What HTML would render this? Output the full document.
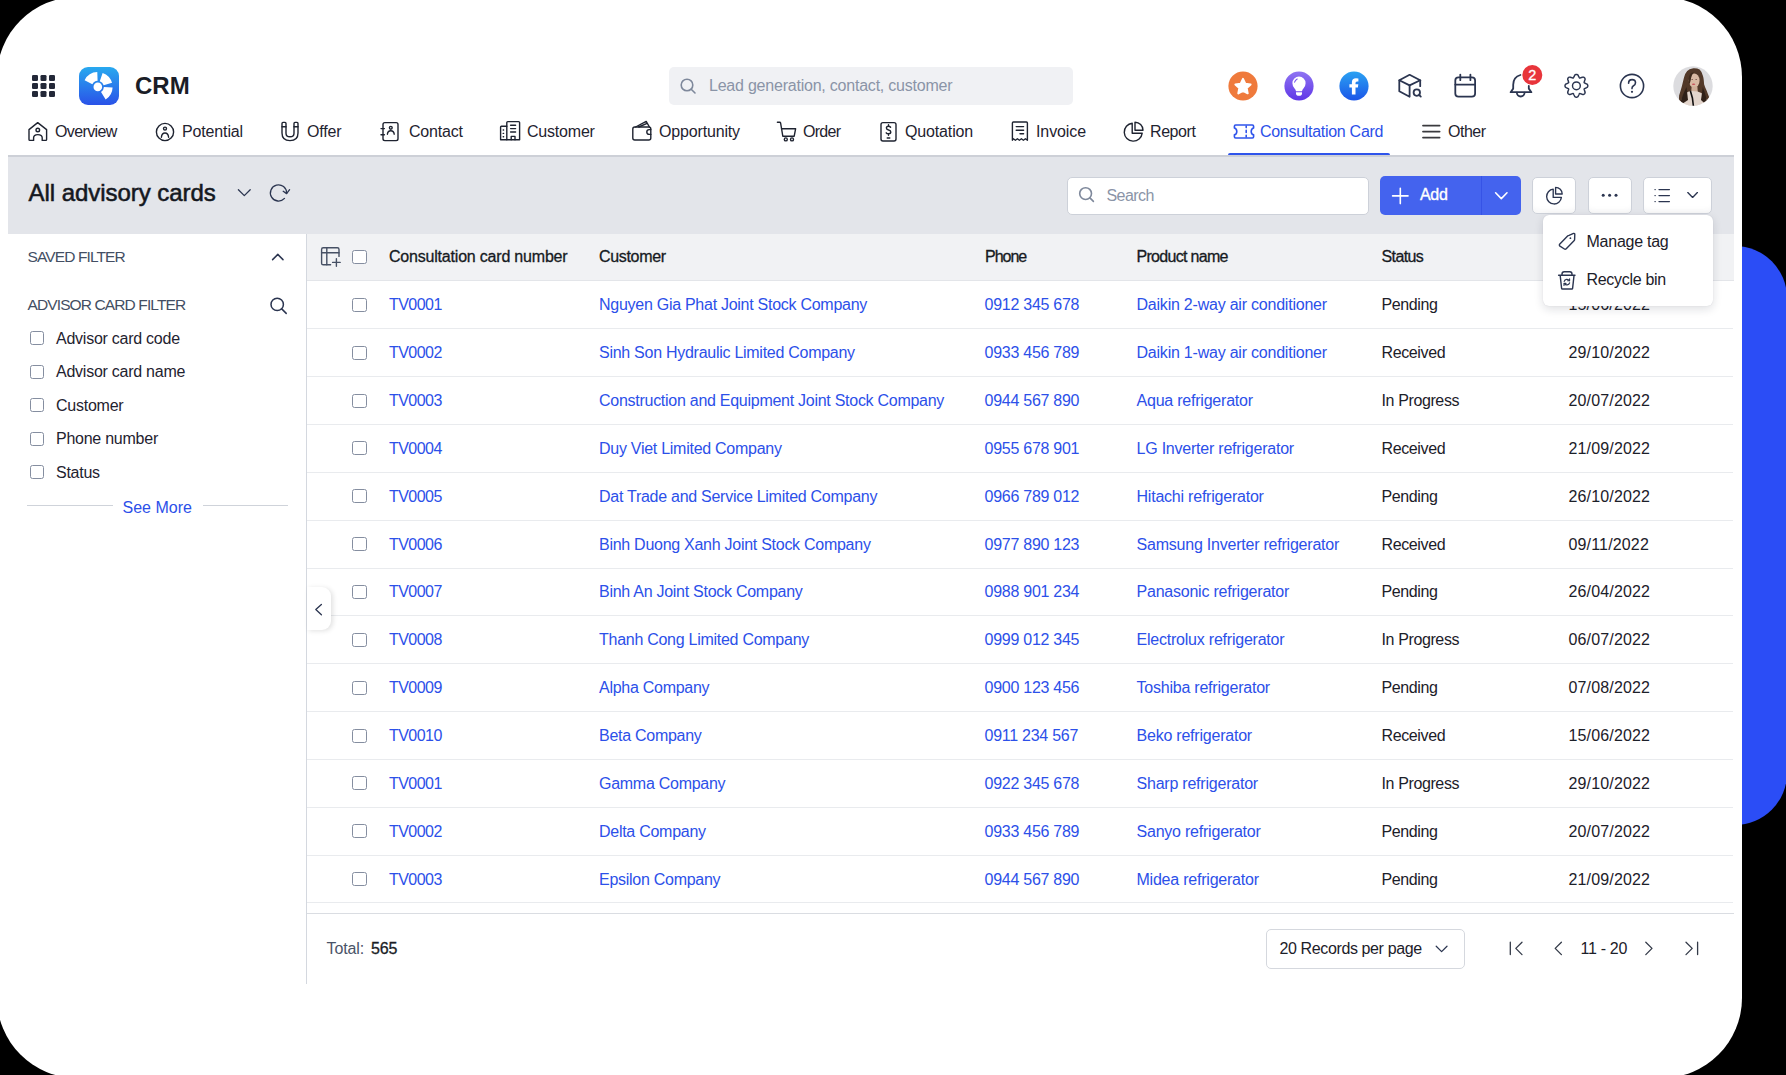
<!DOCTYPE html>
<html><head><meta charset="utf-8">
<style>
*{box-sizing:border-box;margin:0;padding:0}
html,body{width:1786px;height:1075px;overflow:hidden;background:#000}
body{position:relative;font-family:"Liberation Sans",sans-serif;color:#1F2330}
.blob{position:absolute;left:1683px;top:246px;width:104px;height:579px;border-radius:52px;background:#2B4DF6}
.card{position:absolute;left:-3px;top:-3px;width:1745px;height:1080.5px;border-radius:80px;background:#fff}
.app{position:absolute;left:0;top:0;width:1742px;height:1075px}
.t{position:absolute;white-space:nowrap;font-size:16px;line-height:16px}
.ic{position:absolute;display:block;overflow:visible}
.lk{color:#2C50E9}
.th{color:#161A22;-webkit-text-stroke:0.3px #161A22}
.td{color:#1C2029}
.cb{position:absolute;width:14.4px;height:14px;border:1.5px solid #858EA0;border-radius:2.5px;background:#fff}
</style></head><body>
<div class="blob"></div>
<div class="card"></div>
<div class="app">
<!-- TOP BAR -->
<svg class="ic" style="left:32px;top:75px" width="23" height="22" viewBox="0 0 23 22">
<g fill="#232838">
<rect x="0" y="0" width="6" height="6" rx="1.3"/><rect x="8.5" y="0" width="6" height="6" rx="1.3"/><rect x="17" y="0" width="6" height="6" rx="1.3"/>
<rect x="0" y="8" width="6" height="6" rx="1.3"/><rect x="8.5" y="8" width="6" height="6" rx="1.3"/><rect x="17" y="8" width="6" height="6" rx="1.3"/>
<rect x="0" y="16" width="6" height="6" rx="1.3"/><rect x="8.5" y="16" width="6" height="6" rx="1.3"/><rect x="17" y="16" width="6" height="6" rx="1.3"/>
</g></svg>
<svg class="ic" style="left:79px;top:67px" width="40" height="38" viewBox="0 0 40 38">
<defs><linearGradient id="lg" x1="0" y1="0" x2="0" y2="1"><stop offset="0" stop-color="#28A9EF"/><stop offset="1" stop-color="#2A52E8"/></linearGradient></defs>
<rect width="40" height="38" rx="9" fill="url(#lg)"/>
<g fill="#fff">
<path d="M13.36 17.13L5.61 13.18A14.8 14.8 0 0 1 18.28 5.11L18.59 13.80A6.1 6.1 0 0 0 13.36 17.13Z"/>
<path d="M20.79 14.13L23.62 5.91A14.8 14.8 0 0 1 33.03 15.82L24.66 18.22A6.1 6.1 0 0 0 20.79 14.13Z"/>
<path d="M24.90 20.11L33.59 20.42A14.8 14.8 0 0 1 26.64 32.45L22.03 25.07A6.1 6.1 0 0 0 24.90 20.11Z"/>
<circle cx="18.8" cy="19.9" r="4.3"/>
</g></svg>
<div class="t" style="left:135px;top:74px;font-size:24px;line-height:24px;font-weight:700;color:#1A1D27">CRM</div>

<div style="position:absolute;left:669px;top:67px;width:404px;height:38px;border-radius:5px;background:#F0F1F4"></div>
<svg class="ic" style="left:680px;top:78px" width="17" height="16" viewBox="0 0 17 16"><circle cx="7" cy="7" r="5.8" fill="none" stroke="#7E889B" stroke-width="1.6"/><path d="M11.2 11.2 L15 15" stroke="#7E889B" stroke-width="1.6" stroke-linecap="round"/></svg>
<div class="t" style="left:709px;top:78px;color:#8A94A7;letter-spacing:-0.22px">Lead generation, contact, customer</div>

<!-- right icons -->
<svg class="ic" style="left:1228px;top:71px" width="30" height="30" viewBox="0 0 30 30">
<circle cx="15" cy="15" r="14.6" fill="#EF7A3C"/>
<path d="M15.00 7.90 L17.29 12.74 L22.61 13.43 L18.71 17.11 L19.70 22.37 L15.00 19.80 L10.30 22.37 L11.29 17.11 L7.39 13.43 L12.71 12.74 Z" fill="#fff" stroke="#fff" stroke-width="2" stroke-linejoin="round"/>
</svg>
<svg class="ic" style="left:1283.5px;top:71px" width="30" height="30" viewBox="0 0 30 30">
<defs><linearGradient id="pg" x1="0" y1="0" x2="0" y2="1"><stop offset="0" stop-color="#8F74F2"/><stop offset="1" stop-color="#5F36E7"/></linearGradient></defs>
<circle cx="15" cy="15" r="14.6" fill="url(#pg)"/>
<path d="M15 5.6 A6.6 6.6 0 0 1 21.6 12.2 Q21.6 14.8 19.6 17.2 Q18.2 18.8 18 20.2 L12 20.2 Q11.8 18.8 10.4 17.2 Q8.4 14.8 8.4 12.2 A6.6 6.6 0 0 1 15 5.6 Z" fill="#fff"/>
<path d="M12 21.2 L18 21.2 L18 22.2 Q18 24.8 15 24.8 Q12 24.8 12 22.2 Z" fill="#fff"/>
<path d="M10.6 11.2 Q11.2 9 13.2 8" stroke="#7A58EE" stroke-width="1.1" fill="none" stroke-linecap="round"/>
</svg>
<svg class="ic" style="left:1339px;top:71px" width="30" height="30" viewBox="0 0 30 30">
<defs><linearGradient id="fg" x1="0" y1="0" x2="0" y2="1"><stop offset="0" stop-color="#2BA2F2"/><stop offset="1" stop-color="#1B55E8"/></linearGradient></defs>
<circle cx="15" cy="15" r="14.6" fill="url(#fg)"/>
<path d="M12.9 23.4 L12.9 16.4 L10.4 16.4 L10.4 13.2 L12.9 13.2 L12.9 11.2 Q12.9 7.3 17 7.3 Q18.4 7.3 19.4 7.5 L19.4 10.4 L18 10.4 Q16.5 10.4 16.5 12 L16.5 13.2 L19.3 13.2 L18.9 16.4 L16.5 16.4 L16.5 23.4 Z" fill="#fff"/>
</svg>
<svg class="ic" style="left:1393px;top:68px" width="34" height="34" viewBox="1393 68 34 34">
<g fill="none" stroke="#2B3550" stroke-width="1.8" stroke-linejoin="round" stroke-linecap="round">
<path d="M1409.6 85.4 L1399.3 80.3 L1409.6 74.8 L1420.2 80.3 Z"/>
<path d="M1399.3 80.3 L1399.3 91.2 L1409.6 96.7 L1409.6 85.4"/>
<path d="M1420.2 80.3 L1420.2 86.2"/>
<circle cx="1416.8" cy="92.6" r="3.2"/>
<path d="M1419.2 95 L1420.8 96.6"/>
</g></svg>
<svg class="ic" style="left:1450px;top:70px" width="30" height="32" viewBox="1450 70 30 32">
<g fill="none" stroke="#2B3550" stroke-width="1.8" stroke-linecap="round">
<rect x="1455.3" y="77.3" width="19.8" height="19.4" rx="3.2"/>
<path d="M1455.3 84.6 L1475.1 84.6 M1460.3 74.6 L1460.3 80.2 M1470.4 74.6 L1470.4 80.2"/>
</g></svg>
<svg class="ic" style="left:1505px;top:62px" width="45" height="40" viewBox="1505 62 45 40">
<g fill="none" stroke="#2B3550" stroke-width="1.8" stroke-linecap="round" stroke-linejoin="round">
<path d="M1520.4 75 Q1513.2 77 1513.2 84.8 L1513.2 88.6 L1510.6 92.2 L1531.4 92.2 L1528.8 88.6 L1528.8 86"/>
<path d="M1516.8 92.6 A3.9 3.9 0 0 0 1524.6 92.6"/>
</g>
<circle cx="1532.3" cy="75" r="10" fill="#E8353B"/>
<text x="1532.3" y="79.8" text-anchor="middle" font-family="Liberation Sans" font-weight="400" font-size="14.5" fill="#fff" stroke="#fff" stroke-width="0.3">2</text>
</svg>
<svg class="ic" style="left:1562px;top:72px" width="28" height="28" viewBox="0 0 28 28">
<g fill="none" stroke="#2B3550" stroke-width="1.45" stroke-linejoin="round">
<path d="M25.80 13.80 L25.78 14.10 L25.72 14.39 L25.61 14.68 L25.47 14.96 L25.27 15.23 L25.00 15.48 L24.61 15.69 L24.04 15.85 L23.80 16.06 L23.48 16.23 L23.14 16.39 L22.80 16.53 L22.51 16.67 L22.29 16.83 L22.16 17.01 L22.12 17.24 L22.16 17.50 L22.27 17.81 L22.41 18.15 L22.55 18.50 L22.65 18.85 L22.67 19.17 L22.96 19.68 L23.08 20.11 L23.10 20.47 L23.05 20.80 L22.95 21.11 L22.82 21.38 L22.66 21.64 L22.46 21.86 L22.24 22.06 L21.98 22.22 L21.71 22.35 L21.40 22.45 L21.07 22.50 L20.71 22.48 L20.28 22.36 L19.77 22.07 L19.45 22.05 L19.10 21.95 L18.75 21.81 L18.41 21.67 L18.10 21.56 L17.84 21.52 L17.61 21.56 L17.43 21.69 L17.27 21.91 L17.13 22.20 L16.99 22.54 L16.83 22.88 L16.66 23.20 L16.45 23.44 L16.29 24.01 L16.08 24.40 L15.83 24.67 L15.56 24.87 L15.28 25.01 L14.99 25.12 L14.70 25.18 L14.40 25.20 L14.10 25.18 L13.81 25.12 L13.52 25.01 L13.24 24.87 L12.97 24.67 L12.72 24.40 L12.51 24.01 L12.35 23.44 L12.14 23.20 L11.97 22.88 L11.81 22.54 L11.67 22.20 L11.53 21.91 L11.37 21.69 L11.19 21.56 L10.96 21.52 L10.70 21.56 L10.39 21.67 L10.05 21.81 L9.70 21.95 L9.35 22.05 L9.03 22.07 L8.52 22.36 L8.09 22.48 L7.73 22.50 L7.40 22.45 L7.09 22.35 L6.82 22.22 L6.56 22.06 L6.34 21.86 L6.14 21.64 L5.98 21.38 L5.85 21.11 L5.75 20.80 L5.70 20.47 L5.72 20.11 L5.84 19.68 L6.13 19.17 L6.15 18.85 L6.25 18.50 L6.39 18.15 L6.53 17.81 L6.64 17.50 L6.68 17.24 L6.64 17.01 L6.51 16.83 L6.29 16.67 L6.00 16.53 L5.66 16.39 L5.32 16.23 L5.00 16.06 L4.76 15.85 L4.19 15.69 L3.80 15.48 L3.53 15.23 L3.33 14.96 L3.19 14.68 L3.08 14.39 L3.02 14.10 L3.00 13.80 L3.02 13.50 L3.08 13.21 L3.19 12.92 L3.33 12.64 L3.53 12.37 L3.80 12.12 L4.19 11.91 L4.76 11.75 L5.00 11.54 L5.32 11.37 L5.66 11.21 L6.00 11.07 L6.29 10.93 L6.51 10.77 L6.64 10.59 L6.68 10.36 L6.64 10.10 L6.53 9.79 L6.39 9.45 L6.25 9.10 L6.15 8.75 L6.13 8.43 L5.84 7.92 L5.72 7.49 L5.70 7.13 L5.75 6.80 L5.85 6.49 L5.98 6.22 L6.14 5.96 L6.34 5.74 L6.56 5.54 L6.82 5.38 L7.09 5.25 L7.40 5.15 L7.73 5.10 L8.09 5.12 L8.52 5.24 L9.03 5.53 L9.35 5.55 L9.70 5.65 L10.05 5.79 L10.39 5.93 L10.70 6.04 L10.96 6.08 L11.19 6.04 L11.37 5.91 L11.53 5.69 L11.67 5.40 L11.81 5.06 L11.97 4.72 L12.14 4.40 L12.35 4.16 L12.51 3.59 L12.72 3.20 L12.97 2.93 L13.24 2.73 L13.52 2.59 L13.81 2.48 L14.10 2.42 L14.40 2.40 L14.70 2.42 L14.99 2.48 L15.28 2.59 L15.56 2.73 L15.83 2.93 L16.08 3.20 L16.29 3.59 L16.45 4.16 L16.66 4.40 L16.83 4.72 L16.99 5.06 L17.13 5.40 L17.27 5.69 L17.43 5.91 L17.61 6.04 L17.84 6.08 L18.10 6.04 L18.41 5.93 L18.75 5.79 L19.10 5.65 L19.45 5.55 L19.77 5.53 L20.28 5.24 L20.71 5.12 L21.07 5.10 L21.40 5.15 L21.71 5.25 L21.98 5.38 L22.24 5.54 L22.46 5.74 L22.66 5.96 L22.82 6.22 L22.95 6.49 L23.05 6.80 L23.10 7.13 L23.08 7.49 L22.96 7.92 L22.67 8.43 L22.65 8.75 L22.55 9.10 L22.41 9.45 L22.27 9.79 L22.16 10.10 L22.12 10.36 L22.16 10.59 L22.29 10.77 L22.51 10.93 L22.80 11.07 L23.14 11.21 L23.48 11.37 L23.80 11.54 L24.04 11.75 L24.61 11.91 L25.00 12.12 L25.27 12.37 L25.47 12.64 L25.61 12.92 L25.72 13.21 L25.78 13.50 Z"/>
<circle cx="14.4" cy="13.8" r="3.9"/>
</g></svg>
<svg class="ic" style="left:1618px;top:72px" width="28" height="28" viewBox="0 0 28 28">
<circle cx="14" cy="14" r="11.6" fill="none" stroke="#2B3550" stroke-width="1.6"/>
<path d="M10.6 11.2 Q10.6 7.6 14.1 7.6 Q17.5 7.6 17.5 10.8 Q17.5 12.8 15.2 14 Q14 14.7 14 16.6" fill="none" stroke="#2B3550" stroke-width="1.6" stroke-linecap="round"/>
<circle cx="14" cy="19.8" r="1.1" fill="#2B3550"/>
</svg>
<svg class="ic" style="left:1672.6px;top:66px" width="40" height="40" viewBox="0 0 40 40">
<defs><clipPath id="av"><circle cx="20" cy="20" r="19.7"/></clipPath></defs>
<g clip-path="url(#av)">
<rect width="40" height="40" fill="#DCDCDF"/>
<path d="M20.4 2.3 Q16 2.8 14.2 4.9 Q11.6 7.8 11 11.6 L8.8 20.5 Q7.4 25.5 6.1 29.5 Q5.6 33.5 6.6 34.8 L10.1 36.2 L31.1 36.2 L34.7 35.3 Q36.8 33.5 36 30.8 Q34.8 27.8 33.8 25 Q31.8 21 31.1 18.3 Q30.8 12 29.8 9.4 Q28.4 5.2 26.6 3.6 Q24 2.1 20.4 2.3 Z" fill="#513828"/>
<ellipse cx="21.2" cy="14.6" rx="5.4" ry="7.2" fill="#D9B9A3"/>
<path d="M15.6 12.5 Q16.2 6.5 21 6.2 Q18.4 8.6 17.8 14 Q17.2 17 16 18.6 Z" fill="#3E2A1C"/>
<path d="M18.6 20.5 L24.4 20.5 L24.8 26 L18.2 26 Z" fill="#CFAE98"/>
<path d="M7 40 Q8.5 30 13 27 Q16 25 18 25 L24.5 25.5 Q29 26.5 31 29 Q34 33 35 40 Z" fill="#E3D5CC"/>
<path d="M6 40 L9.5 30 Q12 24 13.5 21 L15 34 Z" fill="#2F2018"/>
<path d="M34.5 40 L33 31 Q31.5 25 29.8 21 L28 34 Z" fill="#2F2018"/>
<path d="M17.4 25 L19.4 32 L20.4 40" stroke="#121010" stroke-width="1.6" fill="none"/>
<ellipse cx="20.6" cy="18.2" rx="1.7" ry="0.8" fill="#C9505A"/>
<ellipse cx="19.2" cy="13.4" rx="0.9" ry="0.5" fill="#7A5A4C"/>
<ellipse cx="23.2" cy="13.4" rx="0.9" ry="0.5" fill="#7A5A4C"/>
</g></svg>

<!-- NAV -->
<div class="t" style="left:55px;top:123.5px;letter-spacing:-0.61px">Overview</div>
<div class="t" style="left:182px;top:123.5px;letter-spacing:-0.14px">Potential</div>
<div class="t" style="left:307px;top:123.5px;letter-spacing:-0.18px">Offer</div>
<div class="t" style="left:409px;top:123.5px;letter-spacing:-0.19px">Contact</div>
<div class="t" style="left:527px;top:123.5px;letter-spacing:-0.2px">Customer</div>
<div class="t" style="left:659px;top:123.5px;letter-spacing:-0.16px">Opportunity</div>
<div class="t" style="left:803px;top:123.5px;letter-spacing:-0.7px">Order</div>
<div class="t" style="left:905px;top:123.5px;letter-spacing:-0.15px">Quotation</div>
<div class="t" style="left:1036px;top:123.5px;letter-spacing:-0.1px">Invoice</div>
<div class="t" style="left:1150px;top:123.5px;letter-spacing:-0.42px">Report</div>
<div class="t" style="left:1260px;top:123.5px;letter-spacing:-0.29px;color:#2C50E9">Consultation Card</div>
<div class="t" style="left:1448px;top:123.5px;letter-spacing:-0.5px">Other</div>
<div style="position:absolute;left:1228px;top:152.5px;width:162px;height:3px;border-radius:2px 2px 0 0;background:#2F54EB"></div>
<svg class="ic" style="left:0;top:0" width="1742" height="160" viewBox="0 0 1742 160">
<g fill="none" stroke="#1E2330" stroke-width="1.4" stroke-linecap="round" stroke-linejoin="round">
<!-- home -->
<path d="M29 139.6 L29 129.6 L37.7 122.6 L46.6 129.6 L46.6 139.6 Q46.6 140.4 45.8 140.4 L42.2 140.4 L42.2 137.8 Q42.2 134.6 37.8 134.6 Q33.6 134.6 33.6 137.8 L33.6 140.4 L29.8 140.4 Q29 140.4 29 139.6 Z"/>
<circle cx="37.8" cy="130" r="1.8"/>
<!-- potential -->
<circle cx="165" cy="132" r="8.6"/>
<circle cx="165" cy="128.6" r="1.5"/>
<path d="M161.4 137.2 Q161.8 133 165 133 Q168.2 133 168.6 137.2"/>
<!-- offer magnet -->
<path d="M282 123.4 Q282 122.4 283 122.4 L285 122.4 Q286 122.4 286 123.4 L286 133.2 Q286 136.8 290 136.8 Q294 136.8 294 133.2 L294 123.4 Q294 122.4 295 122.4 L297 122.4 Q298 122.4 298 123.4 L298 133 Q298 140.6 290 140.6 Q282 140.6 282 133 Z"/>
<path d="M282 126.8 L286 126.8 M294 126.8 L298 126.8"/>
<!-- contact -->
<rect x="383" y="122.6" width="15" height="18" rx="1.8"/>
<path d="M381 128.6 L384.4 128.6 M381 134.8 L384.4 134.8"/>
<circle cx="390.8" cy="127.8" r="1.4"/>
<path d="M387.4 134.2 Q387.8 130.8 390.8 130.8 Q393.8 130.8 394.2 134.2"/>
<!-- customer building -->
<path d="M506.8 139.8 L506.8 122.6 Q506.8 121.6 507.8 121.6 L518.6 121.6 Q519.6 121.6 519.6 122.6 L519.6 139.8 Z"/>
<path d="M506.8 126.2 L501.4 126.2 Q500.6 126.2 500.6 127 L500.6 139.8 L506.8 139.8"/>
<path d="M510.6 125.2 L515.6 125.2 M510.6 128.6 L515.6 128.6 M510.6 132 L515.6 132"/>
<path d="M511.2 139.8 L511.2 136.4 L515 136.4 L515 139.8"/>
<path d="M503.2 130 L503.6 130 M503.2 133.4 L503.6 133.4 M503.2 136.8 L503.6 136.8"/>
<!-- opportunity wallet -->
<rect x="632.8" y="127" width="18" height="13" rx="2"/>
<path d="M635.6 127 L646.2 121.4 L649.4 127 M638.8 127 L647 123.4"/>
<path d="M650.8 129.6 L649.2 129.6 Q646.8 129.6 646.8 132 Q646.8 134.4 649.2 134.4 L650.8 134.4"/>
<!-- order cart -->
<path d="M777.4 122.2 L779.6 122.2 Q780.4 122.2 780.6 123 L782.8 136.2 L794.2 136.2 L795.6 128.8 L781.4 128.8"/>
<circle cx="785.8" cy="139.4" r="1.5"/>
<circle cx="792" cy="139.4" r="1.5"/>
<!-- quotation -->
<rect x="881" y="122.6" width="15" height="18.4" rx="2"/>
<path d="M890.6 127.2 Q889.8 126.2 888.4 126.2 Q886.4 126.2 886.4 128 Q886.4 129.6 888.6 130 Q890.8 130.4 890.8 132 Q890.8 133.8 888.6 133.8 Q886.8 133.8 886.2 132.8 M888.5 124.8 L888.5 126.2 M888.5 133.8 L888.5 135.2 M887.2 138 L889.8 138"/>
<!-- invoice -->
<path d="M1012.4 140.2 L1012.4 123 Q1012.4 122 1013.4 122 L1026.4 122 Q1027.4 122 1027.4 123 L1027.4 140.2 L1025.4 138.8 L1023.4 140.2 L1021.4 138.8 L1019.4 140.2 L1017.4 138.8 L1015.4 140.2 L1013.4 138.8 Z"/>
<path d="M1016.2 126.6 L1023.6 126.6 M1016.2 130.2 L1023.6 130.2 M1020 133.8 L1023.6 133.8"/>
<!-- report -->
<path d="M1132.2 123.2 A9 9 0 1 0 1142.2 133.2 L1132.2 133.2 Z"/>
<path d="M1135 122.2 A8 8 0 0 1 1143 130.2 L1135 130.2 Z"/>
<!-- other -->
<path d="M1423 125.6 L1439.6 125.6 M1423 131.6 L1439.6 131.6 M1423 137.6 L1439.6 137.6" stroke="#3A3A3E" stroke-width="1.8"/>
</g>
<g fill="none" stroke="#2F54EB" stroke-width="1.6" stroke-linejoin="round">
<path d="M1235.6 125 L1252.4 125 Q1253.6 125 1253.6 126.2 L1253.6 128 Q1251.2 128.6 1251.2 131.4 Q1251.2 134.2 1253.6 134.8 L1253.6 136.8 Q1253.6 138 1252.4 138 L1235.6 138 Q1234.4 138 1234.4 136.8 L1234.4 134.8 Q1236.8 134.2 1236.8 131.4 Q1236.8 128.6 1234.4 128 L1234.4 126.2 Q1234.4 125 1235.6 125 Z"/>
<path d="M1246.2 126 L1246.2 127.6 M1246.2 130.4 L1246.2 132.4 M1246.2 135.2 L1246.2 137" stroke-linecap="round"/>
</g>
</svg>
<!--BAND-->
<div style="position:absolute;left:8px;top:155px;width:1725.5px;height:78.5px;background:#E3E5EA;border-top:2px solid #CDD0D7"></div>
<div class="t" style="left:28.5px;top:181px;font-size:24px;line-height:24px;color:#15181F;-webkit-text-stroke:0.55px #15181F;letter-spacing:-0.05px">All advisory cards</div>
<svg class="ic" style="left:230px;top:180px" width="70" height="30" viewBox="230 180 70 30">
<path d="M238.4 189.8 L244.3 195.6 L250.2 189.8" fill="none" stroke="#2B3550" stroke-width="1.3" stroke-linecap="round" stroke-linejoin="round"/>
<path d="M284.5 198.4 A8.1 8.1 0 1 1 286.6 193.2" fill="none" stroke="#2B3550" stroke-width="1.3" stroke-linecap="round"/>
<path d="M283.2 191.3 L286.6 193.6 L289.6 189.7" fill="none" stroke="#2B3550" stroke-width="1.3" stroke-linecap="round" stroke-linejoin="round"/>
</svg>
<div style="position:absolute;left:1066.5px;top:176.5px;width:302.5px;height:38px;border-radius:5px;background:#fff;border:1px solid #CDD1D9"></div>
<svg class="ic" style="left:1077px;top:185px" width="20" height="20" viewBox="1077 185 20 20"><circle cx="1085.6" cy="193.6" r="5.9" fill="none" stroke="#7E889B" stroke-width="1.6"/><path d="M1089.9 197.9 L1093.4 201.4" stroke="#7E889B" stroke-width="1.6" stroke-linecap="round"/></svg>
<div class="t" style="left:1106.5px;top:187.5px;color:#8A94A7;letter-spacing:-0.55px">Search</div>
<div style="position:absolute;left:1379.5px;top:176px;width:141.5px;height:38.5px;border-radius:5px;background:#4463EE"></div>
<div style="position:absolute;left:1480.5px;top:176px;width:1px;height:38.5px;background:#3653E6"></div>
<svg class="ic" style="left:1385px;top:180px" width="130" height="30" viewBox="1385 180 130 30">
<path d="M1400.3 188.2 L1400.3 203.6 M1392.6 195.9 L1408 195.9" stroke="#fff" stroke-width="1.6" stroke-linecap="round"/>
<path d="M1495.6 192.8 L1501.3 198.6 L1507 192.8" fill="none" stroke="#fff" stroke-width="1.6" stroke-linecap="round" stroke-linejoin="round"/>
</svg>
<div class="t" style="left:1420px;top:186.8px;color:#fff;-webkit-text-stroke:0.35px #fff;letter-spacing:-0.3px">Add</div>
<div style="position:absolute;left:1531.5px;top:176.5px;width:44px;height:37.5px;border-radius:5px;background:#fff;border:1px solid #CDD1D9;box-shadow:inset 0 -6px 6px -4px rgba(30,40,60,0.05)"></div>
<div style="position:absolute;left:1587.5px;top:176.5px;width:44px;height:37.5px;border-radius:5px;background:#fff;border:1px solid #CDD1D9;box-shadow:inset 0 -6px 6px -4px rgba(30,40,60,0.05)"></div>
<div style="position:absolute;left:1643px;top:176.5px;width:69px;height:37.5px;border-radius:5px;background:#fff;border:1px solid #CDD1D9;box-shadow:inset 0 -6px 6px -4px rgba(30,40,60,0.05)"></div>
<svg class="ic" style="left:1540px;top:180px" width="170" height="30" viewBox="1540 180 170 30">
<g fill="none" stroke="#2B3550" stroke-width="1.35" stroke-linejoin="round" stroke-linecap="round">
<path d="M1553.2 189.2 A7.4 7.4 0 1 0 1561.4 197.4 L1553.2 197.4 Z"/>
<path d="M1555.6 187.4 A6.6 6.6 0 0 1 1562.2 194 L1555.6 194 Z"/>
<path d="M1655 189.6 L1655.2 189.6 M1655 195.6 L1655.2 195.6 M1655 201.6 L1655.2 201.6"/>
<path d="M1659 189.6 L1669.4 189.6 M1659 195.6 L1669.4 195.6 M1659 201.6 L1669.4 201.6"/>
<path d="M1687.8 192.6 L1692.6 197.4 L1697.4 192.6"/>
</g>
<g fill="#2B3550"><circle cx="1603.2" cy="195.2" r="1.5"/><circle cx="1609.6" cy="195.2" r="1.5"/><circle cx="1616" cy="195.2" r="1.5"/></g>
</svg>
<!--LEFT PANEL-->
<div style="position:absolute;left:306px;top:233.5px;width:1px;height:750px;background:#D4D8DF"></div>
<div class="t" style="left:27.5px;top:249px;font-size:15.5px;line-height:15.5px;color:#434E63;letter-spacing:-0.88px">SAVED FILTER</div>
<div class="t" style="left:27.5px;top:296.8px;font-size:15.5px;line-height:15.5px;color:#434E63;letter-spacing:-0.88px">ADVISOR CARD FILTER</div>
<svg class="ic" style="left:265px;top:245px" width="30" height="75" viewBox="265 245 30 75">
<path d="M272.6 259.6 L277.8 254.4 L283 259.6" fill="none" stroke="#2B3550" stroke-width="1.5" stroke-linecap="round" stroke-linejoin="round"/>
<circle cx="277.2" cy="304.4" r="6.2" fill="none" stroke="#2B3550" stroke-width="1.5"/>
<path d="M281.7 308.9 L286.2 313.4" stroke="#2B3550" stroke-width="1.5" stroke-linecap="round"/>
</svg>
<div class="cb" style="left:29.6px;top:331.3px"></div>
<div class="cb" style="left:29.6px;top:364.8px"></div>
<div class="cb" style="left:29.6px;top:398.3px"></div>
<div class="cb" style="left:29.6px;top:431.8px"></div>
<div class="cb" style="left:29.6px;top:465.3px"></div>
<div class="t" style="left:56px;top:330.5px;letter-spacing:-0.25px">Advisor card code</div>
<div class="t" style="left:56px;top:364px;letter-spacing:-0.25px">Advisor card name</div>
<div class="t" style="left:56px;top:397.5px;letter-spacing:-0.25px">Customer</div>
<div class="t" style="left:56px;top:431px;letter-spacing:-0.25px">Phone number</div>
<div class="t" style="left:56px;top:464.5px;letter-spacing:-0.25px">Status</div>
<div style="position:absolute;left:27px;top:505px;width:85.5px;height:1px;background:#CFD3DA"></div>
<div style="position:absolute;left:202.5px;top:505px;width:85.5px;height:1px;background:#CFD3DA"></div>
<div class="t lk" style="left:122.5px;top:499.5px">See More</div>
<!--TABLE-->
<div style="position:absolute;left:307px;top:233.5px;width:1426.5px;height:47px;background:#F1F2F4;border-bottom:1px solid #E3E5E9"></div>
<svg class="ic" style="left:318px;top:244px" width="26" height="26" viewBox="318 244 26 26"><g fill="none" stroke="#465064" stroke-width="1.4" stroke-linecap="round" stroke-linejoin="round"><path d="M330.6 264.8 L323.2 264.8 Q321.6 264.8 321.6 263.2 L321.6 249.4 Q321.6 247.8 323.2 247.8 L337.4 247.8 Q339 247.8 339 249.4 L339 256.4"/><path d="M321.6 252.8 L339 252.8 M326.8 247.8 L326.8 264.8"/><path d="M336.4 258.6 L336.4 266.2 M332.6 262.4 L340.2 262.4"/></g></svg>
<div class="cb" style="left:352.4px;top:250px"></div>
<div class="t th" style="left:389px;top:248.5px;letter-spacing:-0.2px">Consultation card number</div>
<div class="t th" style="left:599px;top:248.5px;letter-spacing:-0.32px">Customer</div>
<div class="t th" style="left:985px;top:248.5px;letter-spacing:-1.0px">Phone</div>
<div class="t th" style="left:1136.5px;top:248.5px;letter-spacing:-0.7px">Product name</div>
<div class="t th" style="left:1381.5px;top:248.5px;letter-spacing:-0.62px">Status</div>
<div class="t th" style="left:1568.5px;top:248.5px;letter-spacing:-0.3px">Created date</div>
<div style="position:absolute;left:307px;top:328.25px;width:1426px;height:1px;background:#E9EBEE"></div>
<div class="cb" style="left:352.4px;top:297.90px"></div>
<div class="t lk" style="left:389px;top:297.30px;letter-spacing:-0.55px">TV0001</div>
<div class="t lk" style="left:599px;top:297.30px;letter-spacing:-0.27px">Nguyen Gia Phat Joint Stock Company</div>
<div class="t lk" style="left:984.5px;top:297.30px;letter-spacing:-0.26px">0912 345 678</div>
<div class="t lk" style="left:1136.5px;top:297.30px;letter-spacing:-0.22px">Daikin 2-way air conditioner</div>
<div class="t td" style="left:1381.5px;top:297.30px;letter-spacing:-0.38px">Pending</div>
<div class="t td" style="left:1568.5px;top:297.30px;letter-spacing:0.16px">15/06/2022</div>
<div style="position:absolute;left:307px;top:376.10px;width:1426px;height:1px;background:#E9EBEE"></div>
<div class="cb" style="left:352.4px;top:345.75px"></div>
<div class="t lk" style="left:389px;top:345.15px;letter-spacing:-0.55px">TV0002</div>
<div class="t lk" style="left:599px;top:345.15px;letter-spacing:-0.27px">Sinh Son Hydraulic Limited Company</div>
<div class="t lk" style="left:984.5px;top:345.15px;letter-spacing:-0.26px">0933 456 789</div>
<div class="t lk" style="left:1136.5px;top:345.15px;letter-spacing:-0.22px">Daikin 1-way air conditioner</div>
<div class="t td" style="left:1381.5px;top:345.15px;letter-spacing:-0.38px">Received</div>
<div class="t td" style="left:1568.5px;top:345.15px;letter-spacing:0.16px">29/10/2022</div>
<div style="position:absolute;left:307px;top:423.95px;width:1426px;height:1px;background:#E9EBEE"></div>
<div class="cb" style="left:352.4px;top:393.60px"></div>
<div class="t lk" style="left:389px;top:393.00px;letter-spacing:-0.55px">TV0003</div>
<div class="t lk" style="left:599px;top:393.00px;letter-spacing:-0.27px">Construction and Equipment Joint Stock Company</div>
<div class="t lk" style="left:984.5px;top:393.00px;letter-spacing:-0.26px">0944 567 890</div>
<div class="t lk" style="left:1136.5px;top:393.00px;letter-spacing:-0.22px">Aqua refrigerator</div>
<div class="t td" style="left:1381.5px;top:393.00px;letter-spacing:-0.38px">In Progress</div>
<div class="t td" style="left:1568.5px;top:393.00px;letter-spacing:0.16px">20/07/2022</div>
<div style="position:absolute;left:307px;top:471.80px;width:1426px;height:1px;background:#E9EBEE"></div>
<div class="cb" style="left:352.4px;top:441.45px"></div>
<div class="t lk" style="left:389px;top:440.85px;letter-spacing:-0.55px">TV0004</div>
<div class="t lk" style="left:599px;top:440.85px;letter-spacing:-0.27px">Duy Viet Limited Company</div>
<div class="t lk" style="left:984.5px;top:440.85px;letter-spacing:-0.26px">0955 678 901</div>
<div class="t lk" style="left:1136.5px;top:440.85px;letter-spacing:-0.22px">LG Inverter refrigerator</div>
<div class="t td" style="left:1381.5px;top:440.85px;letter-spacing:-0.38px">Received</div>
<div class="t td" style="left:1568.5px;top:440.85px;letter-spacing:0.16px">21/09/2022</div>
<div style="position:absolute;left:307px;top:519.65px;width:1426px;height:1px;background:#E9EBEE"></div>
<div class="cb" style="left:352.4px;top:489.30px"></div>
<div class="t lk" style="left:389px;top:488.70px;letter-spacing:-0.55px">TV0005</div>
<div class="t lk" style="left:599px;top:488.70px;letter-spacing:-0.27px">Dat Trade and Service Limited Company</div>
<div class="t lk" style="left:984.5px;top:488.70px;letter-spacing:-0.26px">0966 789 012</div>
<div class="t lk" style="left:1136.5px;top:488.70px;letter-spacing:-0.22px">Hitachi refrigerator</div>
<div class="t td" style="left:1381.5px;top:488.70px;letter-spacing:-0.38px">Pending</div>
<div class="t td" style="left:1568.5px;top:488.70px;letter-spacing:0.16px">26/10/2022</div>
<div style="position:absolute;left:307px;top:567.50px;width:1426px;height:1px;background:#E9EBEE"></div>
<div class="cb" style="left:352.4px;top:537.15px"></div>
<div class="t lk" style="left:389px;top:536.55px;letter-spacing:-0.55px">TV0006</div>
<div class="t lk" style="left:599px;top:536.55px;letter-spacing:-0.27px">Binh Duong Xanh Joint Stock Company</div>
<div class="t lk" style="left:984.5px;top:536.55px;letter-spacing:-0.26px">0977 890 123</div>
<div class="t lk" style="left:1136.5px;top:536.55px;letter-spacing:-0.22px">Samsung Inverter refrigerator</div>
<div class="t td" style="left:1381.5px;top:536.55px;letter-spacing:-0.38px">Received</div>
<div class="t td" style="left:1568.5px;top:536.55px;letter-spacing:0.16px">09/11/2022</div>
<div style="position:absolute;left:307px;top:615.35px;width:1426px;height:1px;background:#E9EBEE"></div>
<div class="cb" style="left:352.4px;top:585.00px"></div>
<div class="t lk" style="left:389px;top:584.40px;letter-spacing:-0.55px">TV0007</div>
<div class="t lk" style="left:599px;top:584.40px;letter-spacing:-0.27px">Binh An Joint Stock Company</div>
<div class="t lk" style="left:984.5px;top:584.40px;letter-spacing:-0.26px">0988 901 234</div>
<div class="t lk" style="left:1136.5px;top:584.40px;letter-spacing:-0.22px">Panasonic refrigerator</div>
<div class="t td" style="left:1381.5px;top:584.40px;letter-spacing:-0.38px">Pending</div>
<div class="t td" style="left:1568.5px;top:584.40px;letter-spacing:0.16px">26/04/2022</div>
<div style="position:absolute;left:307px;top:663.20px;width:1426px;height:1px;background:#E9EBEE"></div>
<div class="cb" style="left:352.4px;top:632.85px"></div>
<div class="t lk" style="left:389px;top:632.25px;letter-spacing:-0.55px">TV0008</div>
<div class="t lk" style="left:599px;top:632.25px;letter-spacing:-0.27px">Thanh Cong Limited Company</div>
<div class="t lk" style="left:984.5px;top:632.25px;letter-spacing:-0.26px">0999 012 345</div>
<div class="t lk" style="left:1136.5px;top:632.25px;letter-spacing:-0.22px">Electrolux refrigerator</div>
<div class="t td" style="left:1381.5px;top:632.25px;letter-spacing:-0.38px">In Progress</div>
<div class="t td" style="left:1568.5px;top:632.25px;letter-spacing:0.16px">06/07/2022</div>
<div style="position:absolute;left:307px;top:711.05px;width:1426px;height:1px;background:#E9EBEE"></div>
<div class="cb" style="left:352.4px;top:680.70px"></div>
<div class="t lk" style="left:389px;top:680.10px;letter-spacing:-0.55px">TV0009</div>
<div class="t lk" style="left:599px;top:680.10px;letter-spacing:-0.27px">Alpha Company</div>
<div class="t lk" style="left:984.5px;top:680.10px;letter-spacing:-0.26px">0900 123 456</div>
<div class="t lk" style="left:1136.5px;top:680.10px;letter-spacing:-0.22px">Toshiba refrigerator</div>
<div class="t td" style="left:1381.5px;top:680.10px;letter-spacing:-0.38px">Pending</div>
<div class="t td" style="left:1568.5px;top:680.10px;letter-spacing:0.16px">07/08/2022</div>
<div style="position:absolute;left:307px;top:758.90px;width:1426px;height:1px;background:#E9EBEE"></div>
<div class="cb" style="left:352.4px;top:728.55px"></div>
<div class="t lk" style="left:389px;top:727.95px;letter-spacing:-0.55px">TV0010</div>
<div class="t lk" style="left:599px;top:727.95px;letter-spacing:-0.27px">Beta Company</div>
<div class="t lk" style="left:984.5px;top:727.95px;letter-spacing:-0.26px">0911 234 567</div>
<div class="t lk" style="left:1136.5px;top:727.95px;letter-spacing:-0.22px">Beko refrigerator</div>
<div class="t td" style="left:1381.5px;top:727.95px;letter-spacing:-0.38px">Received</div>
<div class="t td" style="left:1568.5px;top:727.95px;letter-spacing:0.16px">15/06/2022</div>
<div style="position:absolute;left:307px;top:806.75px;width:1426px;height:1px;background:#E9EBEE"></div>
<div class="cb" style="left:352.4px;top:776.40px"></div>
<div class="t lk" style="left:389px;top:775.80px;letter-spacing:-0.55px">TV0001</div>
<div class="t lk" style="left:599px;top:775.80px;letter-spacing:-0.27px">Gamma Company</div>
<div class="t lk" style="left:984.5px;top:775.80px;letter-spacing:-0.26px">0922 345 678</div>
<div class="t lk" style="left:1136.5px;top:775.80px;letter-spacing:-0.22px">Sharp refrigerator</div>
<div class="t td" style="left:1381.5px;top:775.80px;letter-spacing:-0.38px">In Progress</div>
<div class="t td" style="left:1568.5px;top:775.80px;letter-spacing:0.16px">29/10/2022</div>
<div style="position:absolute;left:307px;top:854.60px;width:1426px;height:1px;background:#E9EBEE"></div>
<div class="cb" style="left:352.4px;top:824.25px"></div>
<div class="t lk" style="left:389px;top:823.65px;letter-spacing:-0.55px">TV0002</div>
<div class="t lk" style="left:599px;top:823.65px;letter-spacing:-0.27px">Delta Company</div>
<div class="t lk" style="left:984.5px;top:823.65px;letter-spacing:-0.26px">0933 456 789</div>
<div class="t lk" style="left:1136.5px;top:823.65px;letter-spacing:-0.22px">Sanyo refrigerator</div>
<div class="t td" style="left:1381.5px;top:823.65px;letter-spacing:-0.38px">Pending</div>
<div class="t td" style="left:1568.5px;top:823.65px;letter-spacing:0.16px">20/07/2022</div>
<div style="position:absolute;left:307px;top:902.45px;width:1426px;height:1px;background:#E9EBEE"></div>
<div class="cb" style="left:352.4px;top:872.10px"></div>
<div class="t lk" style="left:389px;top:871.50px;letter-spacing:-0.55px">TV0003</div>
<div class="t lk" style="left:599px;top:871.50px;letter-spacing:-0.27px">Epsilon Company</div>
<div class="t lk" style="left:984.5px;top:871.50px;letter-spacing:-0.26px">0944 567 890</div>
<div class="t lk" style="left:1136.5px;top:871.50px;letter-spacing:-0.22px">Midea refrigerator</div>
<div class="t td" style="left:1381.5px;top:871.50px;letter-spacing:-0.38px">Pending</div>
<div class="t td" style="left:1568.5px;top:871.50px;letter-spacing:0.16px">21/09/2022</div>
<div style="position:absolute;left:307px;top:912.5px;width:1426.5px;height:1.2px;background:#DADDE2"></div>
<!--FOOTER-->
<div class="t" style="left:326.5px;top:941px;color:#4A5468;letter-spacing:-0.1px">Total:</div>
<div class="t" style="left:371px;top:941px;color:#1A1D26;-webkit-text-stroke:0.3px #1A1D26;letter-spacing:-0.2px">565</div>
<div style="position:absolute;left:1265.5px;top:928.5px;width:199.5px;height:40px;border-radius:5px;background:#fff;border:1px solid #D5D8DE"></div>
<div class="t" style="left:1279.5px;top:941px;color:#1C2029;letter-spacing:-0.38px">20 Records per page</div>
<div class="t" style="left:1580.5px;top:941px;color:#1C2029;letter-spacing:-0.3px">11 - 20</div>
<svg class="ic" style="left:1430px;top:935px" width="280" height="30" viewBox="1430 935 280 30">
<g fill="none" stroke="#2B3550" stroke-width="1.25" stroke-linecap="round" stroke-linejoin="round">
<path d="M1436.2 946.2 L1441.6 951.6 L1447 946.2"/>
</g>
<g fill="none" stroke="#333A48" stroke-width="1.3" stroke-linecap="round" stroke-linejoin="round">
<path d="M1510.3 942.2 L1510.3 954.6 M1522 942.2 L1515.8 948.4 L1522 954.6"/>
<path d="M1561.4 942.2 L1555.2 948.4 L1561.4 954.6"/>
<path d="M1645.8 942.2 L1652 948.4 L1645.8 954.6"/>
<path d="M1686 942.2 L1692.2 948.4 L1686 954.6 M1697.6 942.2 L1697.6 954.6"/>
</g></svg>
<!--COLLAPSE-->
<div style="position:absolute;left:307px;top:587px;width:24px;height:43px;border-radius:0 9px 9px 0;background:#fff;box-shadow:2px 1px 5px rgba(0,0,0,0.12)"></div>
<svg class="ic" style="left:310px;top:600px" width="16" height="20" viewBox="310 600 16 20"><path d="M321.4 604.4 L315.8 609.6 L321.4 614.8" fill="none" stroke="#2B3550" stroke-width="1.3" stroke-linecap="round" stroke-linejoin="round"/></svg>
<!--MENU-->
<div style="position:absolute;left:1543px;top:215px;width:170px;height:91px;border-radius:6px;background:#fff;box-shadow:0 3px 10px rgba(20,30,50,0.14),0 0 1px rgba(20,30,50,0.15)"></div>
<div class="t td" style="left:1586.5px;top:234px;letter-spacing:-0.25px">Manage tag</div>
<div class="t td" style="left:1586.5px;top:272px;letter-spacing:-0.3px">Recycle bin</div>
<svg class="ic" style="left:1552px;top:226px" width="30" height="70" viewBox="1552 226 30 70">
<g fill="none" stroke="#2B3550" stroke-width="1.4" stroke-linejoin="round" stroke-linecap="round">
<path d="M1559.6 244.2 L1567.6 236 Q1568.2 235.4 1569 235.4 L1573.6 233.4 Q1574.8 233.2 1574.8 234.4 L1574.6 239.4 Q1574.6 240.2 1574 240.8 L1566 249 Q1565.2 249.6 1564.4 249 L1559.6 245.8 Q1559 245 1559.6 244.2 Z"/>
<path d="M1558.6 275.3 L1575 275.3"/>
<path d="M1562 275.3 L1562 274 Q1562 271.8 1564.2 271.8 L1569.8 271.8 Q1572 271.8 1572 274 L1572 275.3"/>
<path d="M1560.2 275.6 L1561.6 288.4 Q1561.7 289 1562.3 289 L1571.9 289 Q1572.5 289 1572.6 288.4 L1574 275.6"/>
<path d="M1569.4 280.6 A2.9 2.9 0 0 0 1564.2 281.4 M1564.4 283.6 A2.9 2.9 0 0 0 1569.6 282.8" stroke-width="1.2"/>
<path d="M1569.6 278.8 L1569.6 280.8 L1567.6 280.8 M1564 285.4 L1564 283.4 L1566 283.4" stroke-width="1.1"/>
</g>
<circle cx="1570.4" cy="238.2" r="0.9" fill="#2B3550"/>
</svg>
<!--END-->
</div>
</body></html>
